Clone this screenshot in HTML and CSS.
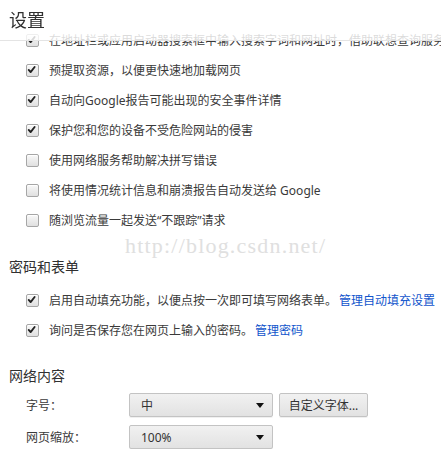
FILE: index.html
```html
<!DOCTYPE html>
<html lang="zh-CN">
<head>
    <meta charset="UTF-8">
    <title>设置</title>
    <link rel="stylesheet" href="styles.css">
</head>
<body>
    <!-- 顶部标题栏 -->
    <header class="page-header">
        <h1>设置</h1>
    </header>

    <div class="watermark">http://blog.csdn.net/</div>

    <main class="content">
        <div class="option-list">
            <label class="option"><span class="checkbox checked"><svg viewBox="0 0 13 13"><path d="M3 6.8 L5.3 9.4 L10 3.4"/></svg></span>在地址栏或应用启动器搜索框中输入搜索字词和网址时，借助联想查询服务显示相关查询和热门网站</label>
            <label class="option"><span class="checkbox checked"><svg viewBox="0 0 13 13"><path d="M3 6.8 L5.3 9.4 L10 3.4"/></svg></span>预提取资源，以便更快速地加载网页</label>
            <label class="option"><span class="checkbox checked"><svg viewBox="0 0 13 13"><path d="M3 6.8 L5.3 9.4 L10 3.4"/></svg></span>自动向Google报告可能出现的安全事件详情</label>
            <label class="option"><span class="checkbox checked"><svg viewBox="0 0 13 13"><path d="M3 6.8 L5.3 9.4 L10 3.4"/></svg></span>保护您和您的设备不受危险网站的侵害</label>
            <label class="option"><span class="checkbox"></span>使用网络服务帮助解决拼写错误</label>
            <label class="option"><span class="checkbox"></span>将使用情况统计信息和崩溃报告自动发送给 Google</label>
            <label class="option"><span class="checkbox"></span>随浏览流量一起发送“不跟踪”请求</label>
        </div>

        <section class="section">
            <h3>密码和表单</h3>
            <div class="option-list">
                <div class="option"><span class="checkbox checked"><svg viewBox="0 0 13 13"><path d="M3 6.8 L5.3 9.4 L10 3.4"/></svg></span>启用自动填充功能，以便点按一次即可填写网络表单。<a class="link" href="#">管理自动填充设置</a></div>
                <div class="option"><span class="checkbox checked"><svg viewBox="0 0 13 13"><path d="M3 6.8 L5.3 9.4 L10 3.4"/></svg></span>询问是否保存您在网页上输入的密码。<a class="link" href="#">管理密码</a></div>
            </div>
        </section>

        <section class="section">
            <h3>网络内容</h3>
            <div class="form-rows">
                <div class="form-row">
                    <span class="form-label">字号：</span>
                    <div class="select">中<span class="arrow"></span></div>
                    <button class="btn">自定义字体...</button>
                </div>
                <div class="form-row">
                    <span class="form-label">网页缩放：</span>
                    <div class="select">100%<span class="arrow"></span></div>
                </div>
            </div>
        </section>
    </main>
</body>
</html>
```
FILE: styles.css
```css
/* 기본 스타일 */
body {
    margin: 0;
    font-family: "Noto Sans", "Noto Sans CJK SC", sans-serif;
    font-size: 12px;
    color: #3a3a3a;
    background-color: #fff;
    overflow: hidden;
}

/* 상단 헤더 (내용 위에 겹침) */
.page-header {
    position: fixed;
    left: 0;
    top: 0;
    width: 100%;
    height: 40px;
    background-color: rgba(255, 255, 255, 0.82);
    border-bottom: 1px solid #e4e4e4;
    z-index: 10;
}

.page-header h1 {
    margin: 0;
    padding: 8px 0 0 9px;
    font-size: 18px;
    font-weight: normal;
    line-height: 24px;
    color: #303030;
}

.watermark {
    position: absolute;
    left: 125px;
    top: 233px;
    font-family: "Liberation Serif", serif;
    font-size: 22px;
    color: #e0e0e0;
    letter-spacing: 1.2px;
    z-index: 5;
}

.content {
    padding-top: 25px;
}

.option {
    display: flex;
    align-items: center;
    height: 30px;
    padding-left: 26px;
    white-space: nowrap;
}

.checkbox {
    flex: none;
    width: 11px;
    height: 11px;
    margin-right: 10px;
    border: 1px solid #a6a6a6;
    border-radius: 2px;
    background: linear-gradient(#f8f8f8, #e0e0e0);
    box-shadow: inset 0 1px 1px #fff;
}

.checkbox svg {
    display: block;
    width: 11px;
    height: 11px;
    overflow: visible;
}

.checkbox path {
    fill: none;
    stroke: #222;
    stroke-width: 2.2;
    stroke-linecap: round;
    stroke-linejoin: round;
    transform: translate(-1px, -1px);
}

.link {
    margin-left: 2px;
    color: #15c;
    text-decoration: none;
}

.section h3 {
    margin: 22px 0 8px 9px;
    font-size: 14px;
    font-weight: normal;
    line-height: 20px;
    color: #303030;
}

.section + .section h3 {
    margin-top: 21px;
    margin-bottom: 7px;
}

.form-rows {
    display: flex;
    flex-direction: column;
    gap: 8px;
}

.form-row {
    display: flex;
    align-items: center;
    padding-left: 26px;
}

.form-label {
    width: 103px;
}

.select,
.btn {
    box-sizing: border-box;
    height: 24px;
    border: 1px solid #c3c3c3;
    border-radius: 2px;
    background: linear-gradient(#f1f1f1, #e2e2e2);
    box-shadow: 0 1px 0 rgba(0, 0, 0, 0.06);
    font-family: inherit;
    font-size: 12px;
    color: #333;
}

.select {
    position: relative;
    display: flex;
    align-items: center;
    width: 144px;
    padding-left: 11px;
}

.arrow {
    position: absolute;
    right: 8px;
    top: 9px;
    border-left: 4px solid transparent;
    border-right: 4px solid transparent;
    border-top: 5px solid #111;
}

.btn {
    width: 89px;
    margin-left: 6px;
    padding: 0;
}
```
